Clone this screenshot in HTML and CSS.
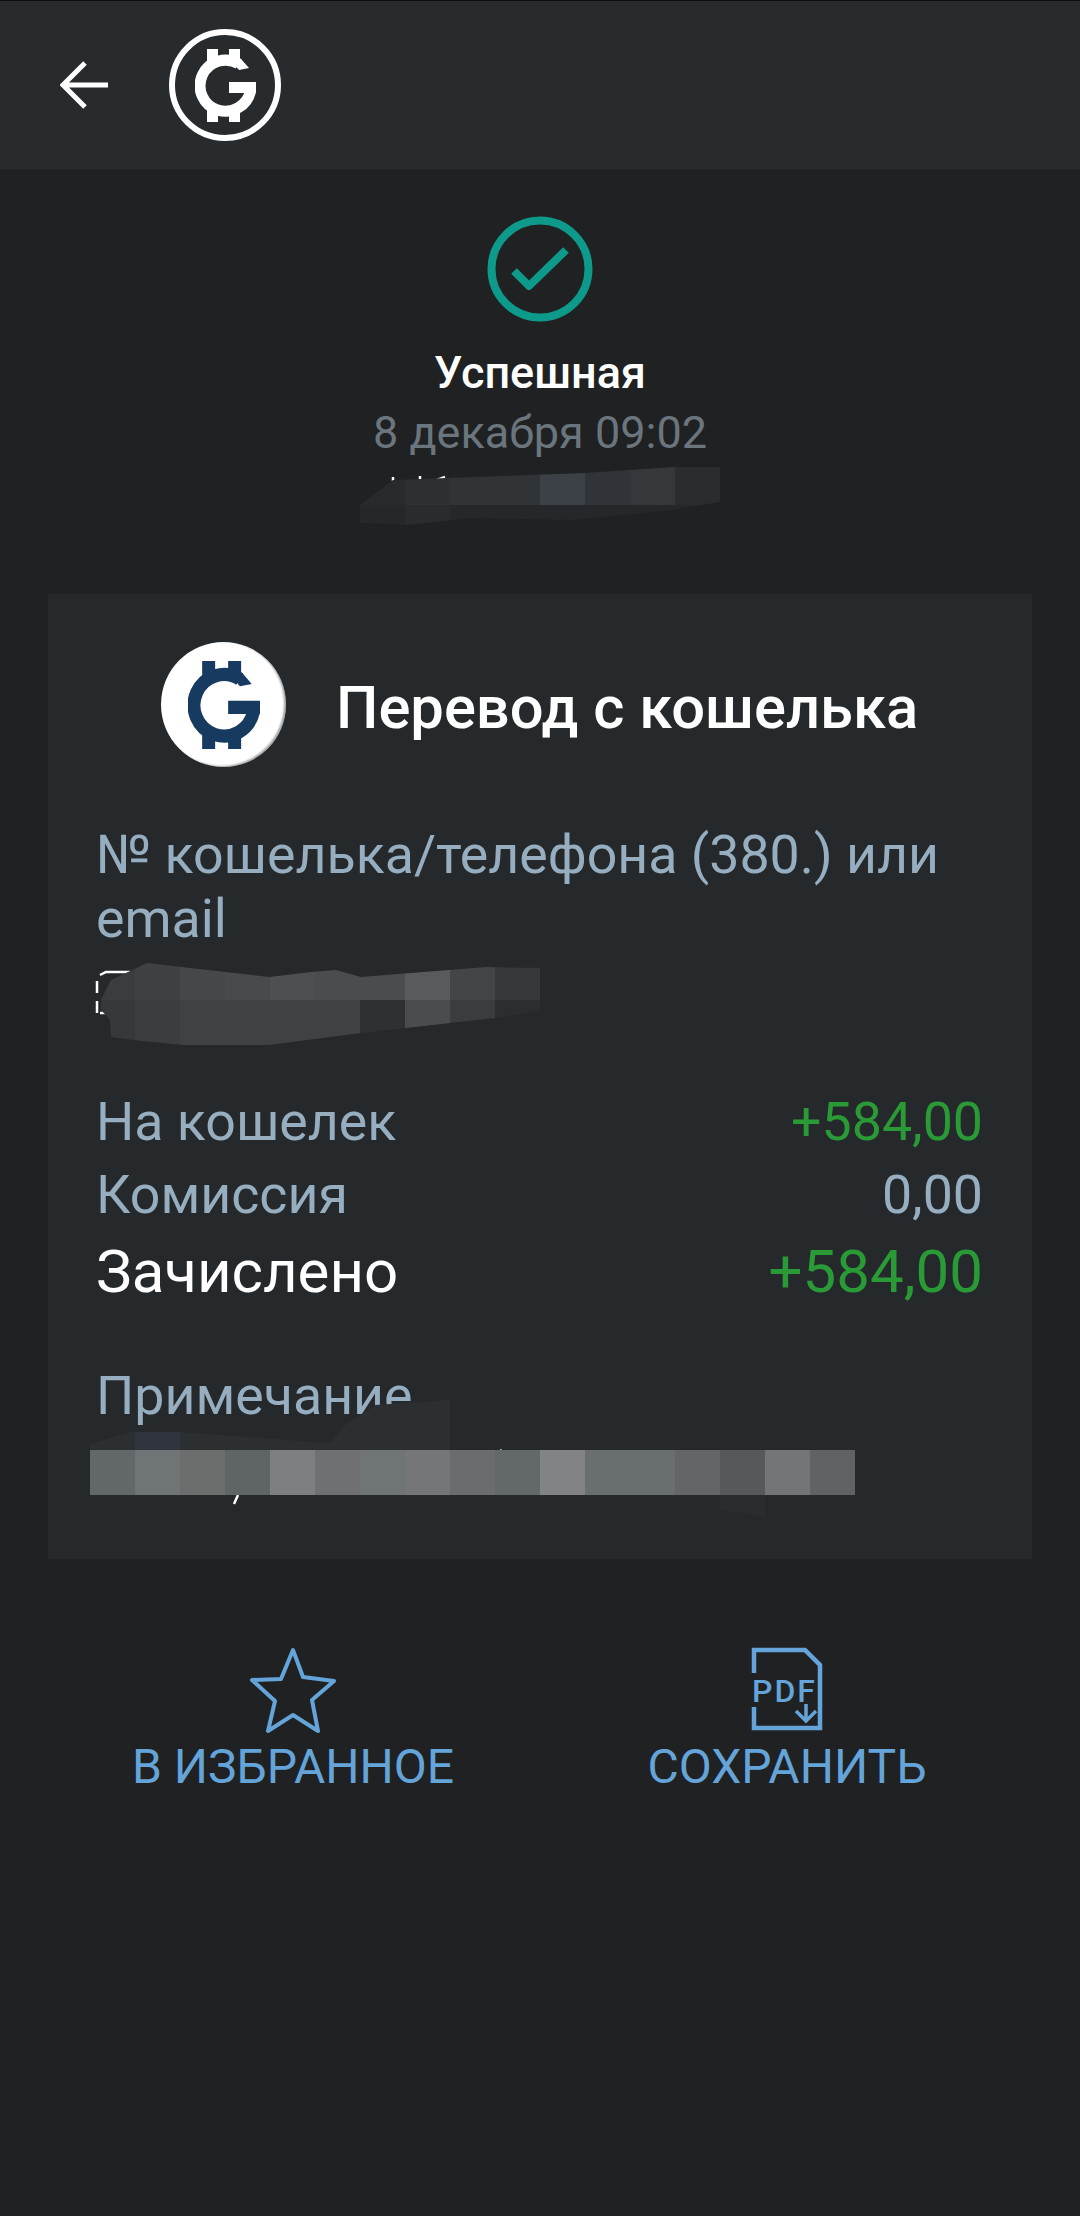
FILE: index.html
```html
<!DOCTYPE html>
<html lang="ru">
<head>
    <meta charset="UTF-8">
    <meta name="viewport" content="width=device-width, initial-scale=1.0">
    <title>Перевод с кошелька</title>
    <link rel="stylesheet" href="styles.css">
</head>
<body>
    <svg class="defs" width="0" height="0">
        <symbol id="g-mark" viewBox="0 0 61 73">
            <path d="M43.75 14.9A25.5 25.5 0 1 0 55.5 42" fill="none" stroke="currentColor" stroke-width="11"/>
            <path d="M34 33H61V44H34ZM12 0H23V14H12ZM34 0H45V14H34ZM12 59H23V73H12ZM34 59H45V73H34ZM46 10L54 19L44 21L38 14Z" fill="currentColor"/>
        </symbol>
    </svg>

    <!-- Top bar -->
    <header class="topbar">
        <svg class="back-icon" width="48" height="48" viewBox="0 0 48 48">
            <path d="M48 24H3M25 2L3 24L25 46" fill="none" stroke="#fff" stroke-width="5"/>
        </svg>
        <div class="brand">
            <svg class="brand-mark" width="61" height="73"><use href="#g-mark"/></svg>
        </div>
    </header>

    <!-- Status -->
    <section class="status">
        <svg class="status-icon" width="106" height="106" viewBox="0 0 106 106">
            <circle cx="53" cy="53" r="48.5" fill="none" stroke="#0d9a8a" stroke-width="8"/>
            <path d="M27 55L42 70L79 34" fill="none" stroke="#0d9a8a" stroke-width="8" stroke-linejoin="round"/>
        </svg>
        <div class="status-title">Успешная</div>
        <div class="status-date">8 декабря 09:02</div>
    </section>

    <!-- Transfer card -->
    <main class="card">
        <div class="card-head">
            <div class="card-logo">
                <svg width="72" height="88" viewBox="0 0 61 73" preserveAspectRatio="none"><use href="#g-mark" width="61" height="73"/></svg>
            </div>
            <h1 class="card-title">Перевод с кошелька</h1>
        </div>

        <div class="label wallet-label">№ кошелька/телефона (380.) или email</div>

        <div class="rows">
            <div class="row"><span class="label">На кошелек</span><span class="amount plus">+584,00</span></div>
            <div class="row"><span class="label">Комиссия</span><span class="amount">0,00</span></div>
            <div class="row total"><span>Зачислено</span><span class="plus">+584,00</span></div>
        </div>

        <div class="label note-label">Примечание</div>
    </main>

    <!-- Actions -->
    <nav class="actions">
        <a href="#" class="action">
            <svg width="88" height="88" viewBox="0 0 88 88">
                <path d="M44 4L54 31L85 35L63 54L69 85L44 69L19 85L26 55L3 34L32 33Z" fill="none" stroke="#64a4d9" stroke-width="4" stroke-linejoin="round"/>
            </svg>
            <span>В ИЗБРАННОЕ</span>
        </a>
        <a href="#" class="action">
            <svg width="88" height="88" viewBox="0 0 88 88">
                <path d="M11 27V4H62L77 19V82H11V61" fill="none" stroke="#64a4d9" stroke-width="4.5"/>
                <text x="9" y="56" class="pdf-text">PDF</text>
                <path d="M63 58V75M53 65L63 75L73 65" fill="none" stroke="#64a4d9" stroke-width="3.5"/>
            </svg>
            <span>СОХРАНИТЬ</span>
        </a>
    </nav>

    <!-- Smudges laid over the private values -->
    <svg class="smudges" width="1080" height="2216" viewBox="0 0 1080 2216">
        <defs>
            <clipPath id="smudge-a"><path d="M360 505L393 480L473 477L585 473L673 467H720V502L673 510L573 520L473 518L407 525L360 523Z"/></clipPath>
            <clipPath id="smudge-b"><path d="M101 1000L111 980L147 963L269 977L311 972L336 970L361 977L486 967L540 968V1010L504 1017L361 1033L269 1045H183L133 1040L111 1037L110 1020L101 1010Z"/></clipPath>
            <clipPath id="smudge-c"><path d="M90 1450V1444L130 1432H180L330 1443L345 1425L375 1405L450 1400V1450H855V1495H90Z"/></clipPath>
        </defs>

        <path d="M393 477v4M420 476v5M445 477l-8 3M97 1013V1001M97 993V981M100 975l6-3H130M100 1013h6M480 1460q8-10 16-8M238 1495l-4 9" fill="none" stroke="#fff" stroke-width="2.5"/>
        <path d="M500 1450q12 8 0 10l-10-2M468 1460q5-10 12-8" fill="none" stroke="#fff" stroke-width="2.5"/>

        <g clip-path="url(#smudge-a)">
            <path fill="#282b2e" d="M360 467H405V505H360Z"/>
            <path fill="#2c3033" d="M405 467H450V505H405Z"/>
            <path fill="#303437" d="M450 467H540V505H450Z"/>
            <path fill="#3c4047" d="M540 467H585V505H540Z"/>
            <path fill="#303337" d="M585 467H630V505H585Z"/>
            <path fill="#34383b" d="M630 467H675V505H630Z"/>
            <path fill="#2a2d30" d="M675 467H720V505H675Z"/>
            <path fill="#25282a" d="M360 505H405V527H360ZM450 505H720V527H450Z"/>
            <path fill="#292c2f" d="M405 505H450V527H405Z"/>
        </g>
        <g clip-path="url(#smudge-b)">
            <path fill="#3a3d40" d="M95 960H135V1000H95Z"/>
            <path fill="#3e4144" d="M135 960H180V1000H135Z"/>
            <path fill="#45484a" d="M180 960H225V1000H180Z"/>
            <path fill="#484b4d" d="M225 960H270V1000H225Z"/>
            <path fill="#4d5052" d="M270 960H315V1000H270Z"/>
            <path fill="#4a4d50" d="M315 960H405V1000H315Z"/>
            <path fill="#585b5d" d="M405 960H450V1000H405Z"/>
            <path fill="#434648" d="M450 960H495V1000H450Z"/>
            <path fill="#36393b" d="M495 960H540V1000H495Z"/>
            <path fill="#36393b" d="M95 1000H135V1046H95Z"/>
            <path fill="#3b3e41" d="M135 1000H180V1046H135Z"/>
            <path fill="#3f4244" d="M180 1000H360V1046H180Z"/>
            <path fill="#2e3134" d="M360 1000H405V1046H360Z"/>
            <path fill="#4a4d4f" d="M405 1000H450V1046H405Z"/>
            <path fill="#3a3d3f" d="M450 1000H495V1046H450Z"/>
            <path fill="#2b2e30" d="M495 1000H540V1046H495Z"/>
        </g>
        <g clip-path="url(#smudge-c)">
            <path fill="#2b2f32" d="M90 1400H450V1450H90Z"/>
            <path fill="#30343c" d="M135 1400H180V1450H135Z"/>
            <path fill="#62676a" d="M90 1450h45v45h-45Z"/>
            <path fill="#6f7476" d="M135 1450h45v45h-45Z"/>
            <path fill="#6c6e6e" d="M180 1450h45v45h-45Z"/>
            <path fill="#5f6467" d="M225 1450h45v45h-45Z"/>
            <path fill="#7d7f80" d="M270 1450h45v45h-45Z"/>
            <path fill="#6e7071" d="M315 1450h45v45h-45Z"/>
            <path fill="#6f7476" d="M360 1450h45v45h-45Z"/>
            <path fill="#747677" d="M405 1450h45v45h-45Z"/>
            <path fill="#6a6c6e" d="M450 1450h45v45h-45Z"/>
            <path fill="#63686b" d="M495 1450h45v45h-45Z"/>
            <path fill="#818385" d="M540 1450h45v45h-45Z"/>
            <path fill="#696e70" d="M585 1450h90v45h-90Z"/>
            <path fill="#636567" d="M675 1450h45v45h-45Z"/>
            <path fill="#55595c" d="M720 1450h45v45h-45Z"/>
            <path fill="#747576" d="M765 1450h45v45h-45Z"/>
            <path fill="#5f6366" d="M810 1450h45v45h-45Z"/>
        </g>
        <path fill="#2a2d30" d="M720 1495H765V1517L720 1510Z"/>
    </svg>
</body>
</html>
```

FILE: styles.css
```css
body {
    position: relative;
    font-family: Roboto, "Noto Sans", sans-serif;
    background-color: #1f2123;
    color: #fff;
    width: 1080px;
    height: 2216px;
    margin: 0;
    overflow: hidden;
}
.defs {
    position: absolute;
}
.topbar {
    height: 168px;
    border-top: 1px solid #0c0d0e;
    background-color: #272b2e;
    display: flex;
    align-items: center;
    padding-left: 60px;
    box-sizing: content-box;
    gap: 61px;
}
.brand {
    width: 112px;
    height: 112px;
    border: 6px solid #fff;
    border-radius: 50%;
    box-sizing: border-box;
    display: flex;
    align-items: center;
    justify-content: center;
    color: #fff;
}
.status {
    display: flex;
    flex-direction: column;
    align-items: center;
    padding-top: 47px;
    height: 378px;
    box-sizing: content-box;
    text-align: center;
}
.status-title {
    font-size: 45px;
    font-weight: 500;
    line-height: 50px;
    margin-top: 26px;
}
.status-date {
    font-size: 45px;
    line-height: 50px;
    margin-top: 10px;
    color: #6b757d;
}
.card {
    margin: 0 48px;
    height: 965px;
    background-color: #25292c;
    padding: 48px 49px 0 48px;
    box-sizing: border-box;
}
.card-head {
    display: flex;
    align-items: center;
    gap: 50px;
    padding-left: 65px;
}
.card-logo {
    width: 125px;
    height: 125px;
    border-radius: 50%;
    background-color: #fff;
    box-shadow: inset -2px -1px 2px rgba(0, 0, 0, 0.35);
    color: #173a60;
    display: flex;
    align-items: center;
    justify-content: center;
}
.card-title {
    margin: 6px 0 0;
    font-size: 59.7px;
    font-weight: 500;
    line-height: 70px;
}
.label {
    color: #96aebf;
    font-size: 53.7px;
    line-height: 64px;
}
.wallet-label {
    margin-top: 56px;
}
.rows {
    margin-top: 134px;
}
.row {
    display: flex;
    justify-content: space-between;
    align-items: center;
    height: 73px;
    font-size: 53.7px;
}
.amount {
    color: #96aebf;
}
.row .plus {
    color: #2a9a36;
}
.total {
    height: 78px;
    margin-top: 1px;
    font-size: 60px;
}
.note-label {
    margin-top: 54px;
}
.actions {
    display: grid;
    grid-template-columns: 494px 494px;
    padding: 87px 0 0 46px;
}
.action {
    display: flex;
    flex-direction: column;
    align-items: center;
    color: #64a4d9;
    font-size: 48px;
    line-height: 60px;
    text-decoration: none;
}
.action span {
    margin-top: 3px;
}
.pdf-text {
    font-size: 32px;
    font-weight: 500;
    letter-spacing: 2px;
    fill: #64a4d9;
}
.smudges {
    position: absolute;
    top: 0;
    left: 0;
}
```
